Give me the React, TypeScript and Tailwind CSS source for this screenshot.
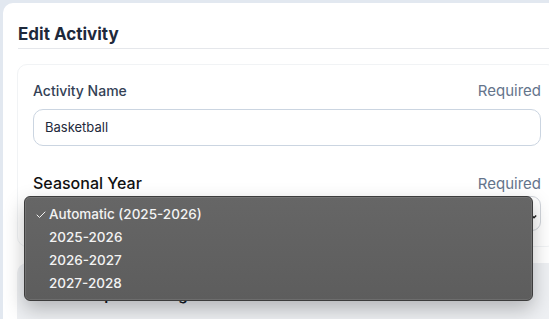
import { Check } from "lucide-react";

const years = ["Automatic (2025-2026)", "2025-2026", "2026-2027", "2027-2028"];

function FieldLabel({ label, big }: { label: string; big?: boolean }) {
  return (
    <div className="flex items-baseline justify-between leading-5">
      <span
        className={
          big
            ? "text-[16px] font-medium text-[#111111]"
            : "text-[14px] font-medium text-[#334155]"
        }
      >
        {label}
      </span>
      <span className="text-[15px] text-[#64748b]">Required</span>
    </div>
  );
}

function YearMenu() {
  return (
    <div className="absolute left-[-9px] top-0 z-10 w-[509px] rounded-[6px] border border-[#3c3c3c] bg-gradient-to-b from-[#666666] to-[#5d5d5d] pb-[5px] pt-[6px] shadow-[inset_0_0_0_1px_rgba(255,255,255,0.1),0_8px_20px_rgba(0,0,0,0.25)]">
      {years.map((year, i) => (
        <div
          key={year}
          className="flex h-[23px] items-center pl-[10px] text-[13.5px] font-medium text-[#f3f3f3]"
        >
          <span className="flex w-[14px] items-center">
            {i === 0 ? <Check className="h-[12px] w-[12px]" strokeWidth={2} /> : null}
          </span>
          {year}
        </div>
      ))}
    </div>
  );
}

export default function App() {
  return (
    <div className="h-[319px] w-[549px] overflow-hidden bg-[#e2e8f0] pl-[3px] pt-[3px] font-['Inter',sans-serif]">
      <div className="h-[400px] w-[600px] rounded-tl-[10px] bg-white pl-[15px] pt-[19px]">
        <div className="border-b border-[#e5e7eb] pb-[2px]">
          <h2 className="text-[17px] font-bold leading-6 text-[#1e293b]">Edit Activity</h2>
        </div>

        <div className="ml-[-1px] mt-[15px] w-[540px] rounded-[10px] border border-[#f1f3f5] px-[15px] pb-[15px] pt-[16px]">
          <FieldLabel label="Activity Name" />
          <div className="mt-[8px] flex h-[37px] items-center rounded-[10px] border border-[#cbd5e1] px-[11px] text-[13px] text-[#1e293b]">
            Basketball
          </div>

          <div className="mt-[27px]">
            <FieldLabel label="Seasonal Year" big />
          </div>
          <div className="relative mt-[2px]">
            <div className="flex h-[35px] items-center justify-end rounded-[9px] border border-[#d1d5db] pr-[3px]">
              <svg width="6" height="10" viewBox="0 0 6 10" className="text-[#222]">
                <path d="M0.8 6.5 3 8.8 5.2 6.5" fill="none" stroke="currentColor" strokeWidth="1.4" />
              </svg>
            </div>
            <YearMenu />
          </div>
        </div>

        <div className="ml-[-1px] mt-[16px] h-[80px] w-[560px] rounded-tl-[10px] bg-[#eef0f3] pl-[18px] pt-[22px]">
          <p className="text-[15px] font-semibold leading-5 text-[#111827]">
            Season Open for Registration
          </p>
        </div>
      </div>
    </div>
  );
}
